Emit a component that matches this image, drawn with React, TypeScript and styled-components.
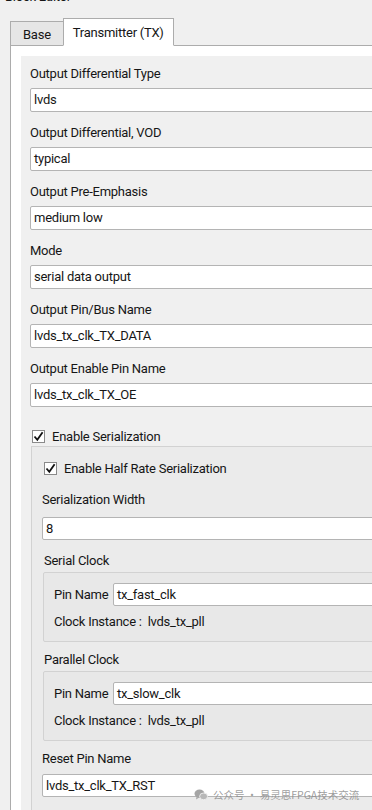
import React from 'react';
import styled, { createGlobalStyle } from 'styled-components';

const GlobalStyle = createGlobalStyle`
    html, body {
        margin: 0;
        padding: 0;
        background: #f0f0f0;
        overflow: hidden;
    }
    body {
        font-family: Roboto, "Noto Sans", sans-serif;
        font-size: 13px;
        letter-spacing: -0.25px;
        color: #161616;
    }
`
const Window = styled.div`
    width: 420px;
    height: 810px;
    position: relative;
    overflow: hidden;
`
const Title = styled.div`
    height: 30px;
    margin-top: -12px;
    padding-left: 5px;
    line-height: 18px;
`
const TabBar = styled.div`
    display: flex;
    align-items: flex-end;
    height: 28px;
    padding-left: 10px;
    margin-bottom: -1px;
    position: relative;
    z-index: 1;
`
const Tab = styled.div<{ $active?: boolean }>`
    height: ${(p) => (p.$active ? '28px' : '25px')};
    padding: 0 ${(p) => (p.$active ? '9px' : '12px')};
    line-height: ${(p) => (p.$active ? '28px' : '25px')};
    background: ${(p) => (p.$active ? '#ffffff' : '#e6e6e6')};
    border: 1px solid #acacac;
    border-bottom: ${(p) => (p.$active ? '1px solid #ffffff' : '1px solid #acacac')};
    margin-left: ${(p) => (p.$active ? '-1px' : '0')};
    box-sizing: border-box;
`
const Pane = styled.div`
    margin-left: 10px;
    background: #ffffff;
    border: 1px solid #acacac;
    padding: 10px 0 0 10px;
    height: 900px;
`
const Panel = styled.div`
    background: #f0f0f0;
    padding: 9px 0 0 9px;
    height: 900px;
`
const Field = styled.div<{ $top?: number }>`
    margin-top: ${(p) => p.$top ?? 0}px;
    margin-bottom: 12px;
`
const Label = styled.div<{ $gap?: number }>`
    line-height: 18px;
    margin-bottom: ${(p) => p.$gap ?? 5}px;
`
const Input = styled.div<{ $h?: number }>`
    height: ${(p) => p.$h ?? 24}px;
    box-sizing: border-box;
    background: #ffffff;
    border: 1px solid #b4b4b4;
    border-radius: 2px;
    padding-left: 3px;
    line-height: ${(p) => (p.$h ?? 24) - 2}px;
    white-space: nowrap;
`
const CheckRow = styled.div<{ $top?: number }>`
    display: flex;
    align-items: center;
    gap: 7px;
    height: 18px;
    margin-top: ${(p) => p.$top ?? 0}px;
    padding-left: 2px;
`
const Box = styled.span`
    width: 13px;
    height: 13px;
    box-sizing: border-box;
    background: #ffffff;
    border: 1px solid #8a8a8a;
    display: flex;
    align-items: center;
    justify-content: center;
`
const Nested = styled.div`
    margin: 1px 0 0 1px;
    background: #ebebeb;
    border: 1px solid #d2d2d2;
    padding: 12px 0 0 10px;
    height: 900px;
`
const GroupTitle = styled.div`
    line-height: 18px;
    padding-left: 2px;
    margin-bottom: 2px;
`
const Group = styled.div`
    margin: 0 0 9px 1px;
    background: #e8e8e8;
    border: 1px solid #d2d2d2;
    border-radius: 2px;
    padding: 10px 0 10px 10px;
`
const PinRow = styled.div`
    display: flex;
    align-items: center;
    gap: 5px;
    margin-bottom: 7px;
`
const PinLabel = styled.span`
    width: 54px;
    white-space: nowrap;
`
const PinInput = styled(Input)`
    flex: 1;
`
const InstRow = styled.div`
    display: flex;
    gap: 6px;
    line-height: 18px;
    white-space: nowrap;
`
const InstLabel = styled.span`
    min-width: 85px;
`
const Watermark = styled.div`
    position: absolute;
    left: 194px;
    top: 787px;
    display: flex;
    align-items: center;
    gap: 5px;
    font-family: "Noto Sans CJK SC", "Noto Sans", sans-serif;
    font-size: 10.5px;
    letter-spacing: 0;
    color: rgba(140, 140, 140, 0.85);
    white-space: nowrap;
`

const Check = () => (
    <svg width="11" height="11" viewBox="0 0 11 11">
        <path d="M1.5 5.5 L4.3 8.8 L9.6 1.2" fill="none" stroke="#111" strokeWidth="1.8" />
    </svg>
);

const WeChat = () => (
    <svg width="14" height="12" viewBox="0 0 14 12">
        <ellipse cx="5.5" cy="4.8" rx="5" ry="4.2" fill="#a5a5a5" />
        <path d="M2.5 8 L2 10.5 L4.8 8.8 Z" fill="#a5a5a5" />
        <ellipse cx="9.6" cy="7.4" rx="4" ry="3.4" fill="#b8b8b8" stroke="#f6f6f6" strokeWidth="0.8" />
    </svg>
);

const fields = [
    ['Output Differential Type', 'lvds'],
    ['Output Differential, VOD', 'typical'],
    ['Output Pre-Emphasis', 'medium low'],
    ['Mode', 'serial data output'],
    ['Output Pin/Bus Name', 'lvds_tx_clk_TX_DATA'],
    ['Output Enable Pin Name', 'lvds_tx_clk_TX_OE'],
];

const clocks = [
    ['Serial Clock', 'tx_fast_clk'],
    ['Parallel Clock', 'tx_slow_clk'],
];

export default function App() {
    return (
        <Window>
            <GlobalStyle />
            <Title>Block Editor</Title>
            <TabBar>
                <Tab>Base</Tab>
                <Tab $active>Transmitter (TX)</Tab>
            </TabBar>
            <Pane>
                <Panel>
                    {fields.map(([label, value]) => (
                        <Field key={label}>
                            <Label>{label}</Label>
                            <Input>{value}</Input>
                        </Field>
                    ))}
                    <CheckRow $top={20}>
                        <Box><Check /></Box>
                        Enable Serialization
                    </CheckRow>
                    <Nested>
                        <CheckRow>
                            <Box><Check /></Box>
                            Enable Half Rate Serialization
                        </CheckRow>
                        <Field $top={14}>
                            <Label $gap={8}>Serialization Width</Label>
                            <Input $h={23}>8</Input>
                        </Field>
                        {clocks.map(([title, pin]) => (
                            <div key={title}>
                                <GroupTitle>{title}</GroupTitle>
                                <Group>
                                    <PinRow>
                                        <PinLabel>Pin Name</PinLabel>
                                        <PinInput $h={23}>{pin}</PinInput>
                                    </PinRow>
                                    <InstRow>
                                        <InstLabel>Clock Instance :</InstLabel>
                                        <span>lvds_tx_pll</span>
                                    </InstRow>
                                </Group>
                            </div>
                        ))}
                        <Field $top={3}>
                            <Label $gap={6}>Reset Pin Name</Label>
                            <Input $h={23}>lvds_tx_clk_TX_RST</Input>
                        </Field>
                    </Nested>
                </Panel>
            </Pane>
            <Watermark>
                <WeChat />
                公众号 · 易灵思FPGA技术交流
            </Watermark>
        </Window>
    );
}
